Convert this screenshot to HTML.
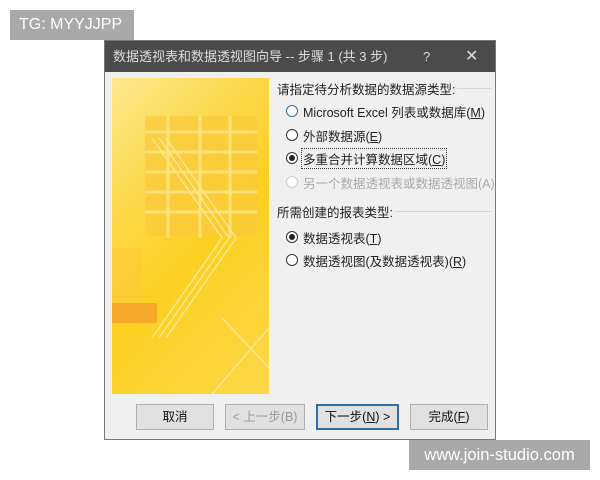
<!DOCTYPE html>
<html><head><meta charset="utf-8"><style>
body{margin:0;width:600px;height:480px;background:#fff;position:relative;overflow:hidden;font-family:"Liberation Sans","Noto Sans CJK SC",sans-serif;}
.a{position:absolute}
.tg{left:10px;top:10px;width:124px;height:30px;background:#a9a9a9;color:#fff;font-size:16px;line-height:30px;text-indent:9px}
.wm{left:409px;top:440px;width:181px;height:30px;background:#a9a9a9;color:#fff;font-size:16.5px;line-height:30px;text-align:center}
.dlg{left:104px;top:40px;width:390px;height:398px;background:#f0f0f0;border:1px solid #777;}
.tb{left:0;top:0;width:390px;height:31px;background:#4b4b4b;color:#ddd;font-size:13px;line-height:31px}
.img{left:7px;top:37px;width:157px;height:316px;background:linear-gradient(135deg,#fde890 0%,#fcd84a 30%,#fbd020 55%,#fcd74a 100%);overflow:hidden}
.t{font-size:12.5px;color:#222;white-space:nowrap}
.r{width:12px;height:12px;border:1px solid #333;border-radius:50%;background:#fff;box-sizing:border-box}
.r.on::after{content:"";position:absolute;left:2px;top:2px;width:6px;height:6px;border-radius:50%;background:#222}
.r.b{border-color:#2b6ea8}
.r.d{border-color:#ccc}
.line{height:1px;background:#d8d8d8}
.btn{top:363px;height:26px;background:#e1e1e1;border:1px solid #adadad;box-sizing:border-box;font-size:12.5px;text-align:center;line-height:24px;color:#111}
u{text-decoration:underline}
</style></head><body>
<div class="a tg">TG: MYYJJPP</div>
<div class="a dlg">
 <div class="a tb"><span style="position:absolute;left:8px">数据透视表和数据透视图向导 -- 步骤 1 (共 3 步)</span><span style="position:absolute;left:318px">?</span><span style="position:absolute;left:360px;font-size:16px">✕</span></div>
 <div class="a img">
  <svg width="157" height="316" style="position:absolute;left:0;top:0">
   <g fill="#fbc93a" opacity=".7">
    <rect x="33" y="38" width="112" height="120"/>
   </g>
   <g stroke="#fde27a" stroke-width="3">
    <line x1="33" y1="54" x2="145" y2="54"/><line x1="33" y1="74" x2="145" y2="74"/><line x1="33" y1="94" x2="145" y2="94"/><line x1="33" y1="114" x2="145" y2="114"/><line x1="33" y1="134" x2="145" y2="134"/>
    <line x1="56" y1="38" x2="56" y2="160"/><line x1="88" y1="38" x2="88" y2="160"/><line x1="118" y1="38" x2="118" y2="160"/>
   </g>
   <polygon points="0,170 30,170 30,230 0,230" fill="#fbc93a" opacity=".6"/>
   <polygon points="0,225 45,225 45,245 0,245" fill="#f6a928"/>
   <g fill="none" stroke="#fde892" stroke-width="1.5"><path d="M40,60 L110,160 L40,260"/><path d="M47,60 L117,160 L47,260"/><path d="M54,60 L124,160 L54,260"/><path d="M100,316 L157,250"/><path d="M110,240 L157,290"/></g>
  </svg>
 </div>
 <div class="a t" style="left:172px;top:38px">请指定待分析数据的数据源类型:</div>
 <div class="a line" style="left:352px;top:47px;width:35px"></div>
 <div class="a r b" style="left:181px;top:64px"></div><div class="a t" style="left:198px;top:61px">Microsoft Excel 列表或数据库(<u>M</u>)</div>
 <div class="a r" style="left:181px;top:88px"></div><div class="a t" style="left:198px;top:85px">外部数据源(<u>E</u>)</div>
 <div class="a r on" style="left:181px;top:111px"></div><div class="a t" style="left:196px;top:107px;border:1px dotted #333;padding:0 1px">多重合并计算数据区域(<u>C</u>)</div>
 <div class="a r d" style="left:181px;top:135px"></div><div class="a t" style="left:198px;top:132px;color:#aaa">另一个数据透视表或数据透视图(A)</div>
 <div class="a t" style="left:172px;top:161px">所需创建的报表类型:</div>
 <div class="a line" style="left:290px;top:170px;width:97px"></div>
 <div class="a r on" style="left:181px;top:190px"></div><div class="a t" style="left:198px;top:187px">数据透视表(<u>T</u>)</div>
 <div class="a r" style="left:181px;top:213px"></div><div class="a t" style="left:198px;top:210px">数据透视图(及数据透视表)(<u>R</u>)</div>
 <div class="a btn" style="left:31px;width:78px">取消</div>
 <div class="a btn" style="left:120px;width:80px;color:#999">&lt; 上一步(B)</div>
 <div class="a btn" style="left:211px;width:83px;border:2px solid #2b6ea8;line-height:22px">下一步(<u>N</u>) &gt;</div>
 <div class="a btn" style="left:305px;width:78px">完成(<u>F</u>)</div>
</div>
<div class="a wm">www.join-studio.com</div>
</body></html>
